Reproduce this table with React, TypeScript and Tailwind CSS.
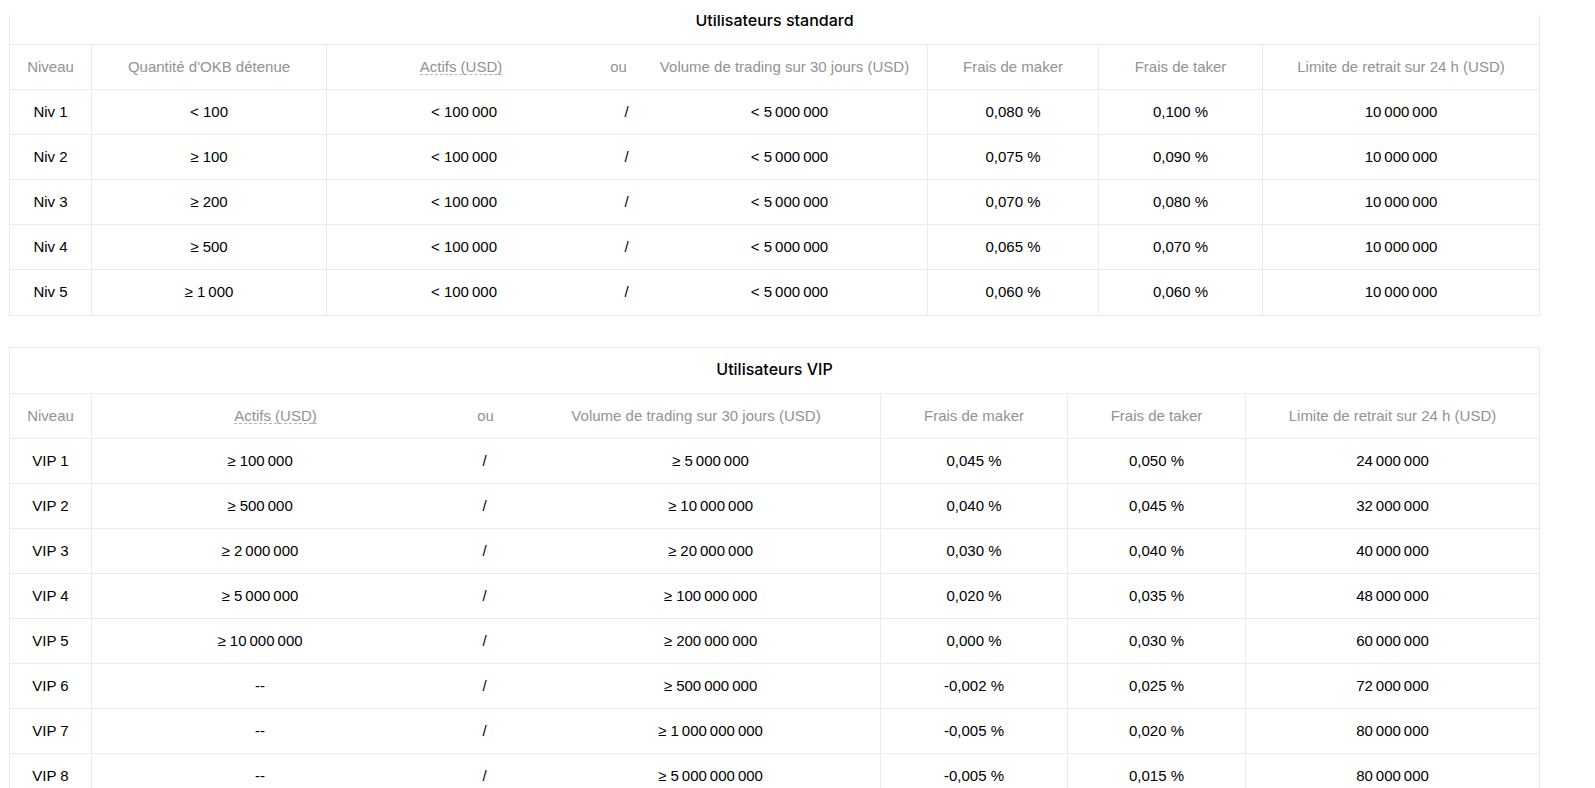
const n = (s: string) => s.replace(/(\d) (?=\d)/g, '$1\u2009');

type Cell = { w: string; text: string; dashed?: boolean };

const stdHead: Cell[][] = [
  [{ w: 'w-[82px]', text: 'Niveau' }],
  [{ w: 'w-[235px]', text: "Quantité d'OKB détenue" }],
  [
    { w: 'w-[268px]', text: 'Actifs (USD)', dashed: true },
    { w: 'w-[47px]', text: 'ou' },
    { w: 'w-[285px]', text: 'Volume de trading sur 30 jours (USD)' },
  ],
  [{ w: 'w-[171px]', text: 'Frais de maker' }],
  [{ w: 'w-[164px]', text: 'Frais de taker' }],
  [{ w: 'flex-1', text: 'Limite de retrait sur 24 h (USD)' }],
];

const stdGroups = ['w-[82px]', 'w-[235px]', 'w-[601px]', 'w-[171px]', 'w-[164px]', 'flex-1'];
const stdData = ['w-[274px]', 'w-[51px]', 'w-[275px]'];

const stdRows = [
  ['Niv 1', '< 100', '< 100 000', '< 5 000 000', '0,080 %', '0,100 %', '10 000 000'],
  ['Niv 2', '≥ 100', '< 100 000', '< 5 000 000', '0,075 %', '0,090 %', '10 000 000'],
  ['Niv 3', '≥ 200', '< 100 000', '< 5 000 000', '0,070 %', '0,080 %', '10 000 000'],
  ['Niv 4', '≥ 500', '< 100 000', '< 5 000 000', '0,065 %', '0,070 %', '10 000 000'],
  ['Niv 5', '≥ 1 000', '< 100 000', '< 5 000 000', '0,060 %', '0,060 %', '10 000 000'],
];

const vipHead: Cell[][] = [
  [{ w: 'w-[82px]', text: 'Niveau' }],
  [
    { w: 'w-[367px]', text: 'Actifs (USD)', dashed: true },
    { w: 'w-[53px]', text: 'ou' },
    { w: 'w-[368px]', text: 'Volume de trading sur 30 jours (USD)' },
  ],
  [{ w: 'w-[187px]', text: 'Frais de maker' }],
  [{ w: 'w-[178px]', text: 'Frais de taker' }],
  [{ w: 'flex-1', text: 'Limite de retrait sur 24 h (USD)' }],
];

const vipGroups = ['w-[82px]', 'w-[789px]', 'w-[187px]', 'w-[178px]', 'flex-1'];
const vipData = ['w-[336px]', 'w-[113px]', 'w-[339px]'];

const vipRows = [
  ['VIP 1', '≥ 100 000', '≥ 5 000 000', '0,045 %', '0,050 %', '24 000 000'],
  ['VIP 2', '≥ 500 000', '≥ 10 000 000', '0,040 %', '0,045 %', '32 000 000'],
  ['VIP 3', '≥ 2 000 000', '≥ 20 000 000', '0,030 %', '0,040 %', '40 000 000'],
  ['VIP 4', '≥ 5 000 000', '≥ 100 000 000', '0,020 %', '0,035 %', '48 000 000'],
  ['VIP 5', '≥ 10 000 000', '≥ 200 000 000', '0,000 %', '0,030 %', '60 000 000'],
  ['VIP 6', '--', '≥ 500 000 000', '-0,002 %', '0,025 %', '72 000 000'],
  ['VIP 7', '--', '≥ 1 000 000 000', '-0,005 %', '0,020 %', '80 000 000'],
  ['VIP 8', '--', '≥ 5 000 000 000', '-0,005 %', '0,015 %', '80 000 000'],
];

function Title({ text }: { text: string }) {
  return (
    <div className="h-[46px] pb-[3px] flex items-center justify-center border-b border-[#ebebeb] text-[16px] font-medium font-['Inter',sans-serif] text-black">
      {text}
    </div>
  );
}

function HeadRow({ groups, cols }: { groups: string[]; cols: Cell[][] }) {
  return (
    <div className="flex h-[45px] border-b border-[#ebebeb] text-[#929292]">
      {cols.map((g, i) => (
        <div
          key={i}
          className={`${groups[i]} h-full flex ${i < cols.length - 1 ? 'border-r border-[#ebebeb]' : ''}`}
        >
          {g.map((c, j) => (
            <div key={j} className={`${c.w} h-full flex items-center justify-center whitespace-nowrap`}>
              {c.dashed ? (
                <span className="leading-[15px] border-b border-dashed border-[#b5b5b5]">{c.text}</span>
              ) : (
                c.text
              )}
            </div>
          ))}
        </div>
      ))}
    </div>
  );
}

function DataRow({
  groups,
  sub,
  subIndex,
  values,
  last,
}: {
  groups: string[];
  sub: string[];
  subIndex: number;
  values: string[];
  last: boolean;
}) {
  // the group at subIndex holds actifs / ou / volume
  let k = 0;
  return (
    <div className={`flex h-[45px] text-black ${last ? '' : 'border-b border-[#ebebeb]'}`}>
      {groups.map((g, i) => {
        const border = i < groups.length - 1 ? 'border-r border-[#ebebeb]' : '';
        if (i === subIndex) {
          const a = values[k++];
          const v = values[k++];
          return (
            <div key={i} className={`${g} h-full flex ${border}`}>
              <div className={`${sub[0]} h-full flex items-center justify-center whitespace-nowrap`}>{n(a)}</div>
              <div className={`${sub[1]} h-full flex items-center justify-center`}>/</div>
              <div className={`${sub[2]} h-full flex items-center justify-center whitespace-nowrap`}>{n(v)}</div>
            </div>
          );
        }
        const val = values[k++];
        return (
          <div key={i} className={`${g} h-full flex items-center justify-center whitespace-nowrap ${border}`}>
            {n(val)}
          </div>
        );
      })}
    </div>
  );
}

export default function App() {
  return (
    <div className="min-h-screen bg-white pl-[9px] text-[15px] font-['Liberation_Sans',Arial,sans-serif] overflow-hidden">
      {/* top bar covering scrolled content */}
      <div className="fixed top-0 left-0 right-0 h-[15px] bg-white z-10" />

      <div className="w-[1531px] -mt-[2px] border border-[#ebebeb]">
        <Title text="Utilisateurs standard" />
        <HeadRow groups={stdGroups} cols={stdHead} />
        {stdRows.map((r, i) => (
          <DataRow key={r[0]} groups={stdGroups} sub={stdData} subIndex={2} values={r} last={i === stdRows.length - 1} />
        ))}
      </div>

      <div className="w-[1531px] mt-[31px] border border-[#ebebeb]">
        <Title text="Utilisateurs VIP" />
        <HeadRow groups={vipGroups} cols={vipHead} />
        {vipRows.map((r, i) => (
          <DataRow key={r[0]} groups={vipGroups} sub={vipData} subIndex={1} values={r} last={i === vipRows.length - 1} />
        ))}
      </div>
    </div>
  );
}
